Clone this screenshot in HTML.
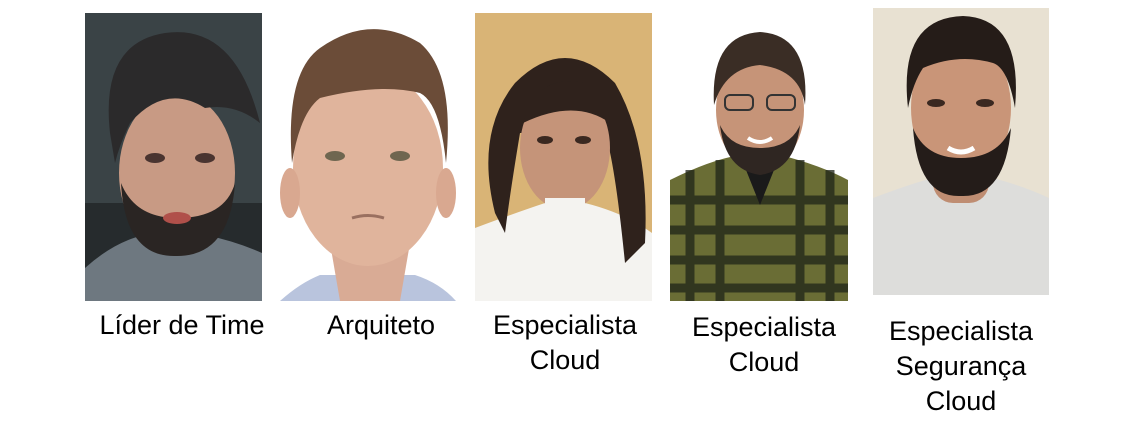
<!DOCTYPE html>
<html><head><meta charset="utf-8"><style>
body{margin:0;width:1134px;height:424px;background:#fff;position:relative;overflow:hidden;font-family:"Liberation Sans",sans-serif;}
svg{position:absolute}
.l{position:absolute;font-size:27px;color:#000;text-align:center;line-height:35px;width:220px}
</style></head><body>
<!-- Photo 1 -->
<svg style="left:85px;top:13px" width="177" height="288" viewBox="0 0 177 288">
<rect width="177" height="288" fill="#3a4346"/>
<rect x="0" y="190" width="177" height="98" fill="#262b2d"/>
<path d="M0 288 L0 255 Q30 228 60 222 L120 222 Q150 228 177 240 L177 288Z" fill="#6e7880"/>
<ellipse cx="92" cy="160" rx="58" ry="80" fill="#c89a84"/>
<path d="M36 170 Q40 245 92 243 Q145 243 150 170 Q140 205 92 205 Q50 205 36 170Z" fill="#2a2523"/>
<path d="M25 120 Q15 30 80 20 Q150 10 175 110 Q150 90 120 95 Q80 70 45 110 Q35 130 30 150Z" fill="#2b2a2b"/>
<ellipse cx="70" cy="145" rx="10" ry="5" fill="#4a3430"/><ellipse cx="120" cy="145" rx="10" ry="5" fill="#4a3430"/>
<ellipse cx="92" cy="205" rx="14" ry="6" fill="#b0504a"/>
</svg>
<!-- Photo 2 -->
<svg style="left:280px;top:13px" width="176" height="288" viewBox="0 0 176 288">
<rect width="176" height="288" fill="#fff"/>
<path d="M0 288 Q20 270 40 262 L135 262 Q160 270 176 288Z" fill="#b9c4dd"/>
<path d="M50 230 L60 288 L120 288 L130 230Z" fill="#d9ab95"/>
<ellipse cx="88" cy="155" rx="75" ry="98" fill="#e0b49c"/>
<ellipse cx="10" cy="180" rx="10" ry="25" fill="#d9a890"/><ellipse cx="166" cy="180" rx="10" ry="25" fill="#d9a890"/>
<path d="M12 150 Q5 60 40 35 Q90 0 140 30 Q175 60 166 150 Q160 90 140 80 Q100 70 40 85 Q20 100 12 150Z" fill="#6b4c38"/>
<ellipse cx="55" cy="143" rx="10" ry="5" fill="#6f6650"/><ellipse cx="120" cy="143" rx="10" ry="5" fill="#6f6650"/>
<path d="M72 205 Q88 200 104 205" stroke="#9a7060" stroke-width="3" fill="none"/>
</svg>
<!-- Photo 3 -->
<svg style="left:475px;top:13px" width="177" height="288" viewBox="0 0 177 288">
<rect width="177" height="288" fill="#d9b476"/>
<path d="M0 288 L0 215 Q40 200 70 190 L110 190 Q150 200 177 220 L177 288Z" fill="#f4f3f0"/>
<path d="M20 200 Q0 120 40 70 Q90 20 140 70 Q175 130 170 230 L150 250 Q140 150 130 120 L45 120 Q35 180 30 220Z" fill="#2f221c"/>
<ellipse cx="90" cy="135" rx="45" ry="62" fill="#c59479"/>
<path d="M48 110 Q60 60 110 70 Q135 90 135 110 Q100 85 48 110Z" fill="#2f221c"/>
<rect x="70" y="185" width="40" height="25" fill="#f4f3f0"/>
<ellipse cx="70" cy="127" rx="8" ry="4" fill="#3a2820"/><ellipse cx="108" cy="127" rx="8" ry="4" fill="#3a2820"/>
</svg>
<!-- Photo 4 -->
<svg style="left:670px;top:30px" width="178" height="271" viewBox="0 0 178 271">
<rect width="178" height="271" fill="#fff"/>
<path d="M0 271 L0 150 Q40 130 70 125 L110 125 Q150 135 178 150 L178 271Z" fill="#6a6d35"/>
<g stroke="#1f2418" stroke-width="9" opacity=".75">
<line x1="0" y1="170" x2="178" y2="170"/><line x1="0" y1="200" x2="178" y2="200"/><line x1="0" y1="230" x2="178" y2="230"/><line x1="0" y1="258" x2="178" y2="258"/>
<line x1="20" y1="140" x2="20" y2="271"/><line x1="50" y1="130" x2="50" y2="271"/><line x1="130" y1="130" x2="130" y2="271"/><line x1="160" y1="140" x2="160" y2="271"/>
</g>
<path d="M70 125 L90 175 L110 125Z" fill="#1a1a1a"/>
<ellipse cx="90" cy="80" rx="44" ry="60" fill="#c69478"/>
<path d="M50 95 Q55 140 90 145 Q125 140 130 95 Q120 118 90 118 Q60 118 50 95Z" fill="#2f2622"/>
<path d="M44 75 Q40 5 90 2 Q140 5 135 75 Q130 40 90 35 Q55 38 44 75Z" fill="#3a2d25"/>
<g fill="none" stroke="#333" stroke-width="2"><rect x="55" y="65" width="28" height="15" rx="5"/><rect x="97" y="65" width="28" height="15" rx="5"/></g>
<path d="M78 108 Q90 116 102 108" stroke="#fff" stroke-width="4" fill="none"/>
</svg>
<!-- Photo 5 -->
<svg style="left:873px;top:8px" width="176" height="287" viewBox="0 0 176 287">
<rect width="176" height="287" fill="#e8e1d2"/>
<path d="M0 287 L0 190 Q40 175 60 170 L120 170 Q150 178 176 190 L176 287Z" fill="#dddddb"/>
<rect x="60" y="150" width="56" height="45" rx="20" fill="#bf8d72"/>
<ellipse cx="88" cy="100" rx="50" ry="72" fill="#c99578"/>
<path d="M40 120 Q45 190 88 188 Q132 190 138 120 Q125 150 88 150 Q52 150 40 120Z" fill="#241c19"/>
<path d="M35 100 Q25 10 90 8 Q150 10 142 100 Q135 60 120 55 Q85 45 50 60 Q40 75 35 100Z" fill="#251c18"/>
<ellipse cx="63" cy="95" rx="9" ry="4" fill="#3a2820"/><ellipse cx="112" cy="95" rx="9" ry="4" fill="#3a2820"/>
<path d="M75 140 Q88 148 101 140" stroke="#fff" stroke-width="5" fill="none"/>
</svg>
<div class="l" style="left:72px;top:308px">Líder de Time</div>
<div class="l" style="left:271px;top:308px">Arquiteto</div>
<div class="l" style="left:455px;top:308px">Especialista<br>Cloud</div>
<div class="l" style="left:654px;top:310px">Especialista<br>Cloud</div>
<div class="l" style="left:851px;top:314px">Especialista<br>Segurança<br>Cloud</div>
</body></html>
